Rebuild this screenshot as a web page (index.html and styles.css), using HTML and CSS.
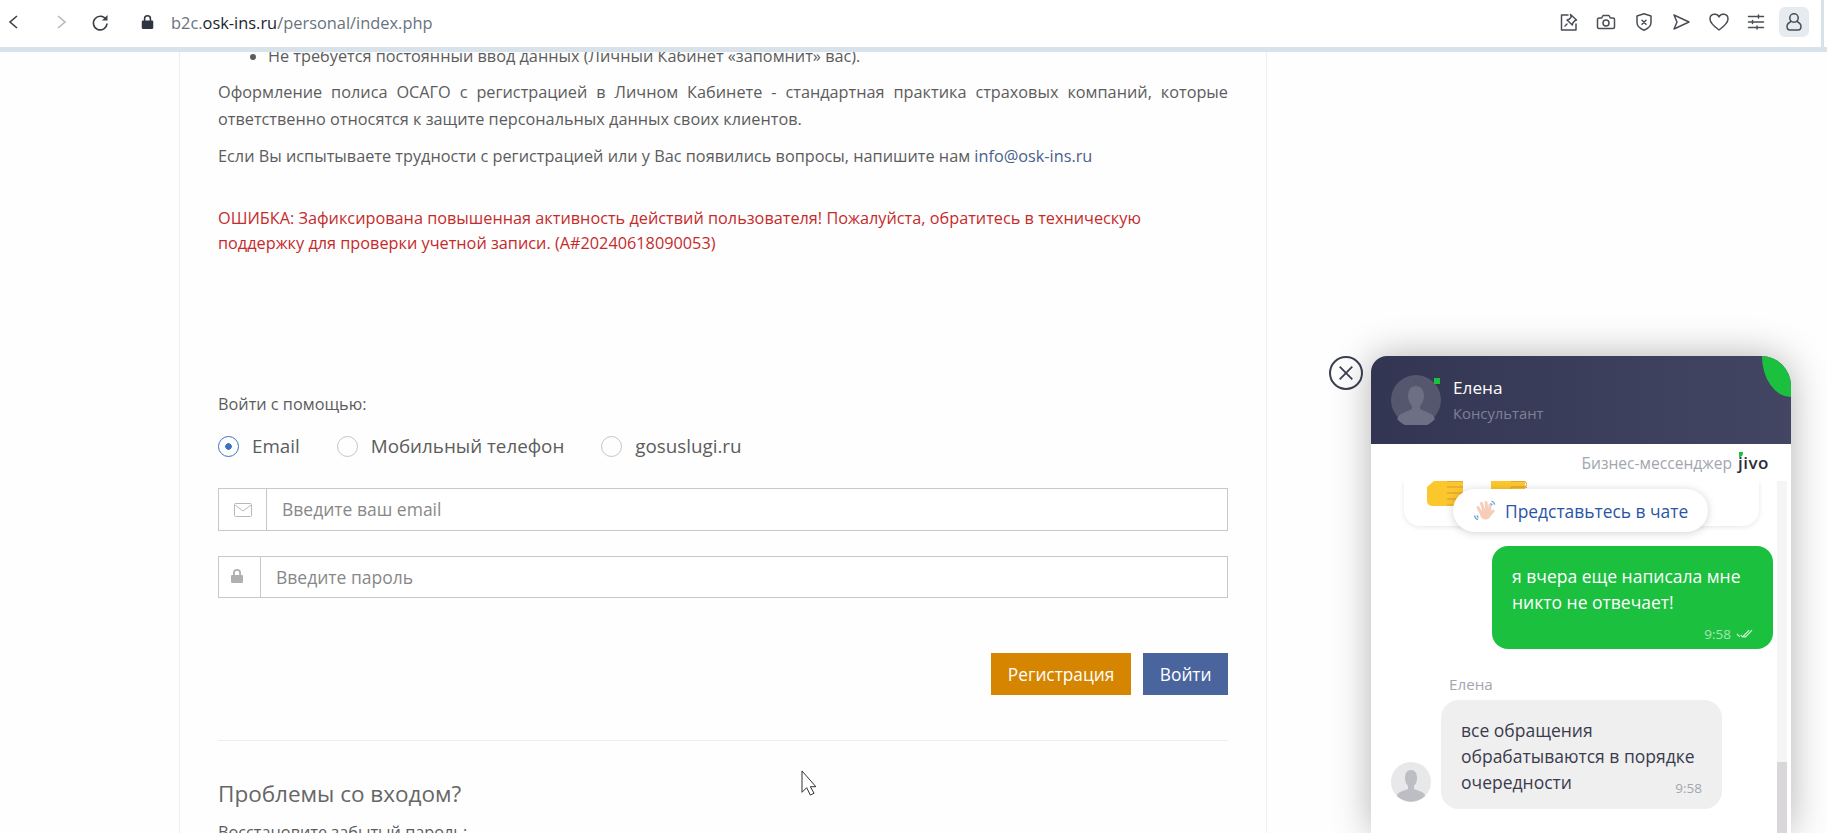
FILE: index.html
```html
<!DOCTYPE html>
<html lang="ru">
<head>
    <meta charset="UTF-8">
    <meta name="viewport" content="width=device-width, initial-scale=1.0">
    <title>Личный кабинет</title>
    <link rel="stylesheet" href="styles.css">
</head>
<body>

<div class="toolbar">
    <svg class="nav-icon back" viewBox="0 0 24 24"><path d="M16 6l-7 6 7 6"/></svg>
    <svg class="nav-icon fwd" viewBox="0 0 24 24"><path d="M8 6l7 6-7 6"/></svg>
    <svg class="nav-icon reload" viewBox="0 0 24 24"><path d="M18 9.500A6.800 6.800 0 1 0 19 13.500"/><path class="solid" d="M19.500 5v5.500H14z"/></svg>
    <svg class="lock" viewBox="0 0 14 16"><path d="M2 6.500h1V4.500a4 4 0 0 1 8 0v2h1a1.200 1.200 0 0 1 1.200 1.200v6.600a1.200 1.200 0 0 1-1.200 1.200H2a1.200 1.200 0 0 1-1.200-1.200V7.700A1.200 1.200 0 0 1 2 6.500zM4.700 6.500h4.600v-2a2.300 2.300 0 0 0-4.600 0z"/></svg>
    <div class="url">b2c.<b>osk-ins.ru</b>/personal/index.php</div>
    <div class="tool-icons">
        <svg class="tool-icon" viewBox="0 0 20 20"><path d="M9 3H2.500v15H17v-6"/><path d="M11.500 2.500l6 5.500-1.700.7-2 2.300-.5 2-5.300-5 2.200-.7 2-2.300z"/><path d="M8 12l-2 2"/></svg>
        <svg class="tool-icon" viewBox="0 0 20 20"><path d="M1.500 7.500A1.500 1.500 0 0 1 3 6h2.700l1.300-2.500h6L14.300 6H17a1.500 1.500 0 0 1 1.500 1.500v7.500a1.500 1.500 0 0 1-1.500 1.500H3A1.500 1.500 0 0 1 1.500 15z"/><circle cx="10" cy="11" r="3"/></svg>
        <svg class="tool-icon" viewBox="0 0 20 20"><path d="M10 1.800l7 2.200v6.500c0 3.700-3.200 6.200-7 7.700-3.800-1.500-7-4-7-7.700V4z"/><path d="M8 8.200l4 4M12 8.200l-4 4"/></svg>
        <svg class="tool-icon" viewBox="0 0 20 20"><path d="M3 3l15 7-15 7 3-7z"/></svg>
        <svg class="tool-icon" viewBox="0 0 20 20"><path d="M10 18C4.500 14 1 11 1 7a4.700 4.700 0 0 1 9-2 4.700 4.700 0 0 1 9 2c0 4-3.500 7-9 11z"/></svg>
        <svg class="tool-icon" viewBox="0 0 20 20"><path d="M2.500 4.500h15M2.500 10h15M2.500 15.500h15M12.500 3v3M6.500 8.500v3M11 14v3"/></svg>
        <div class="profile-btn">
            <svg class="tool-icon" viewBox="0 0 20 20"><circle cx="10" cy="6" r="4.200"/><path d="M7 9.500C4.300 10.800 3 12.500 3 14.500 3 16.500 4.200 18 6 18h8c1.800 0 3-1.500 3-3.500 0-2-1.300-3.700-4-5"/></svg>
        </div>
    </div>
    <div class="window-edge"></div>
</div>

<div class="page">
    <div class="content">
        <ul class="benefits">
            <li>Не требуется постоянный ввод данных (Личный Кабинет «запомнит» вас).</li>
        </ul>
        <p class="justified">Оформление полиса ОСАГО с регистрацией в Личном Кабинете - стандартная практика страховых компаний, которые ответственно относятся к защите персональных данных своих клиентов.</p>
        <p>Если Вы испытываете трудности с регистрацией или у Вас появились вопросы, напишите нам <a href="#">info@osk-ins.ru</a></p>
        <p class="error">ОШИБКА: Зафиксирована повышенная активность действий пользователя! Пожалуйста, обратитесь в техническую поддержку для проверки учетной записи. (A#20240618090053)</p>

        <div class="login-label">Войти с помощью:</div>
        <div class="radios">
            <label class="radio on"><span class="dot"></span>Email</label>
            <label class="radio"><span class="dot"></span>Мобильный телефон</label>
            <label class="radio"><span class="dot"></span>gosuslugi.ru</label>
        </div>

        <div class="field">
            <span class="addon mail">
                <svg viewBox="0 0 18 14"><rect x="0.500" y="0.500" width="17" height="13" rx="1"/><path d="M1 2l8 6 8-6"/></svg>
            </span>
            <span class="placeholder">Введите ваш email</span>
        </div>
        <div class="field second">
            <span class="addon pass">
                <svg viewBox="0 0 12 14"><path class="solid" d="M1 6h1V4a4 4 0 0 1 8 0v2h1a1 1 0 0 1 1 1v6a1 1 0 0 1-1 1H1a1 1 0 0 1-1-1V7a1 1 0 0 1 1-1zM3.800 6h4.400V4a2.200 2.200 0 0 0-4.400 0z"/></svg>
            </span>
            <span class="placeholder">Введите пароль</span>
        </div>

        <div class="buttons">
            <button class="btn orange">Регистрация</button>
            <button class="btn blue">Войти</button>
        </div>

        <hr class="divider">
        <h3>Проблемы со входом?</h3>
        <div class="restore">Восстановите забытый пароль:</div>
    </div>
</div>

<svg class="cursor" viewBox="0 0 16 28"><path d="M1 1v23l5-5 4 8 4-2-4-7h6z"/></svg>

<button class="chat-close">
    <svg viewBox="0 0 20 20"><path d="M3 3l14 14M17 3L3 17"/></svg>
</button>

<div class="chat">
    <div class="chat-head">
        <div class="agent-photo">
            <svg viewBox="0 0 50 50"><path d="M25 11c5 0 8 4 8 10 0 4-2 8-4 10v3l11 5c2 1 3 3 4 5a25 25 0 0 1-38 0c1-2 2-4 4-5l11-5v-3c-2-2-4-6-4-10 0-6 3-10 8-10z"/></svg>
            <span class="online"></span>
        </div>
        <div>
            <div class="agent-name">Елена</div>
            <div class="agent-role">Консультант</div>
        </div>
        <div class="leaf"></div>
    </div>
    <div class="brand-row">
        <span>Бизнес-мессенджер</span>
        <span class="jivo">jivo</span>
    </div>
    <div class="chat-body">
        <div class="msg-list">
            <div class="card-old">
                <svg class="fist" viewBox="0 0 36 25">
                    <path class="palm" d="M7 0h29v21a4 4 0 0 1-4 4H5a5 5 0 0 1-5-5V6z"/>
                    <path class="knuckle" d="M20 .500h14a2 2 0 0 1 0 5.500H20M20 6h15a2.500 2.500 0 0 1 0 6H20M20 12h14a2.500 2.500 0 0 1 0 6H20M20 18h11a2.500 2.500 0 0 1 0 6H20"/>
                </svg>
                <svg class="fist" viewBox="0 0 36 25">
                    <path class="palm" d="M0 0h34v25H0z"/>
                    <path class="knuckle" d="M20 .500h13a2 2 0 0 1 0 5.500H20M20 6h14a2.500 2.500 0 0 1 0 6H20z"/>
                </svg>
            </div>
            <div class="bubble mine">
                я вчера еще написала мне никто не отвечает!
                <div class="stamp">9:58
                    <svg viewBox="0 0 18 10"><path d="M1 5l3 3M5 6l2 2 7-7M8 8l2 0 7-7"/></svg>
                </div>
            </div>
            <div class="sender">Елена</div>
            <div class="agent-row">
                <div class="agent-thumb">
                    <svg viewBox="0 0 40 40"><path d="M20 8c4 0 6 3 6 8 0 3-1 6-3 8v3l8 3c2 1 3 3 3 4a20 20 0 0 1-28 0c0-1 1-3 3-4l8-3v-3c-2-2-3-5-3-8 0-5 2-8 6-8z"/></svg>
                </div>
                <div class="bubble theirs">
                    все обращения обрабатываются в порядке очередности
                    <span class="stamp-in">9:58</span>
                </div>
            </div>
        </div>
        <div class="scrollbar"><div class="thumb"></div></div>
    </div>
    <div class="intro-pill">
        <svg viewBox="0 0 24 24">
            <path class="fingers" d="M8 14L5 8.500M11 12L8.500 4.500M14 12L13 3.500M16.500 13L17 6M16.500 16L20 12"/>
            <ellipse class="palm-hand" cx="12.500" cy="15" rx="5.500" ry="5.500"/>
            <path class="wave" d="M18.500 2c1.500.500 2.800 2 3.200 3.700M17.500 4.500c.800.300 1.400 1 1.700 1.800M1.500 16.500c.300 2 1.800 3.700 3.500 4.200M4 16.500c.200.900.700 1.600 1.500 2"/>
        </svg>
        Представьтесь в чате
    </div>
</div>

</body>
</html>
```

FILE: styles.css
```css
* {
    box-sizing: border-box;
}
html, body {
    height: 100%;
}
body {
    margin: 0;
    overflow: hidden;
    background-color: #fefefe;
    font-family: "Open Sans", Arial, sans-serif;
    color: #5c5c5c;
    position: relative;
}

/* browser toolbar */
.toolbar {
    position: relative;
    display: flex;
    align-items: center;
    height: 52px;
    padding: 0 18px 3px 0;
    background-color: #fff;
    border-bottom: 5px solid #d8e2ea;
}
.nav-icon {
    flex: none;
    width: 24px;
    height: 24px;
    fill: none;
    stroke: #3c4043;
    stroke-width: 1.600;
}
.nav-icon.back {
    margin-left: 1px;
}
.nav-icon.fwd {
    margin-left: 25px;
    stroke: #b4b8bc;
}
.nav-icon.reload {
    margin-left: 14px;
}
.nav-icon .solid {
    fill: #3c4043;
    stroke: none;
}
.lock {
    flex: none;
    width: 13px;
    height: 16px;
    margin-left: 29px;
    fill: #2f3540;
}
.url {
    flex: 1;
    margin-left: 17px;
    font-size: 16.400px;
    color: #68737e;
}
.url b {
    font-weight: 400;
    color: #20242a;
}
.tool-icons {
    display: flex;
    align-items: center;
    gap: 17.500px;
}
.tool-icon {
    width: 20px;
    height: 20px;
    fill: none;
    stroke: #4a4f55;
    stroke-width: 1.500;
    stroke-linejoin: round;
    stroke-linecap: round;
}
.profile-btn {
    display: flex;
    align-items: center;
    justify-content: center;
    width: 30px;
    height: 30px;
    margin-left: -4.500px;
    background-color: #e6ebf0;
    border-radius: 6px;
}
.window-edge {
    position: absolute;
    left: 1821px;
    top: 0;
    width: 3px;
    height: 47px;
    background-color: #d8e2ea;
}

/* page card */
.page {
    width: 1088px;
    margin-left: 179px;
    height: 781px;
    padding: 0 38px;
    border-left: 1px solid #eee;
    border-right: 1px solid #eee;
    overflow: hidden;
}
.content {
    font-size: 16.270px;
    line-height: 27px;
}
.benefits {
    margin: -9px 0 0;
    padding-left: 50px;
}
.content p {
    margin: 10px 0 0;
}
.content .justified {
    margin-top: 9px;
    text-align: justify;
}
.content a {
    color: #4a5f8a;
    text-decoration: none;
}
.content .error {
    margin-top: 36px;
    line-height: 25px;
    color: #c42b2b;
}
.login-label {
    margin-top: 136px;
    line-height: 25px;
}
.radios {
    display: flex;
    gap: 37px;
    margin-top: 15px;
    font-size: 18.800px;
    line-height: 28px;
}
.radio {
    display: flex;
    align-items: center;
    gap: 13px;
}
.dot {
    width: 21px;
    height: 21px;
    border: 1px solid #c4c4c4;
    border-radius: 50%;
}
.radio.on .dot {
    border-color: #3a73c4;
    background: radial-gradient(circle, #3a73c4 0 3px, transparent 3.500px);
}
.field {
    display: flex;
    align-items: center;
    height: 43px;
    margin-top: 28px;
    border: 1px solid #c8c8c8;
    background-color: #fff;
}
.field.second {
    height: 42px;
    margin-top: 25px;
}
.addon {
    display: flex;
    align-items: center;
    justify-content: center;
    height: 100%;
    border-right: 1px solid #c8c8c8;
}
.addon.mail {
    width: 48px;
}
.addon.pass {
    width: 42px;
}
.addon svg {
    fill: none;
    stroke: #b8b8b8;
}
.addon.mail svg {
    width: 18px;
    height: 14px;
}
.addon.pass svg {
    width: 12px;
    height: 14px;
    margin-left: -6px;
    margin-top: -2px;
}
.addon .solid {
    fill: #b0b0b0;
    stroke: none;
}
.placeholder {
    padding-left: 15px;
    font-size: 17.500px;
    color: #888;
}
.buttons {
    display: flex;
    justify-content: flex-end;
    gap: 12px;
    margin-top: 55px;
}
.btn {
    height: 42px;
    padding: 0 17px;
    border: none;
    color: #fff;
    font-family: inherit;
    font-size: 17.300px;
}
.btn.orange {
    background-color: #d58500;
}
.btn.blue {
    padding: 0 16.500px;
    background-color: #4a659e;
}
.divider {
    margin: 45px 0 0;
    border: none;
    border-top: 1px solid #eee;
}
h3 {
    margin: 38px 0 0;
    font-size: 22.500px;
    line-height: 30px;
    font-weight: 400;
    color: #666;
}
.restore {
    margin-top: 11px;
    line-height: 25px;
}
.cursor {
    position: absolute;
    left: 801px;
    top: 770px;
    width: 15px;
    height: 26px;
    fill: #fff;
    stroke: #222;
    stroke-width: 1;
}

/* chat widget */
.chat-close {
    position: absolute;
    left: 1329px;
    top: 356px;
    display: flex;
    align-items: center;
    justify-content: center;
    width: 34px;
    height: 34px;
    padding: 0;
    background-color: #fff;
    border: 2px solid #3c4150;
    border-radius: 50%;
}
.chat-close svg {
    width: 18px;
    height: 18px;
    fill: none;
    stroke: #3c4150;
    stroke-width: 2;
}
.chat {
    position: absolute;
    left: 1371px;
    top: 356px;
    width: 420px;
    height: 477px;
    display: flex;
    flex-direction: column;
    background-color: #fff;
    border-radius: 16px 30px 0 0;
    box-shadow: 0 0 38px rgba(0, 0, 0, 0.3);
}
.chat-head {
    position: relative;
    display: flex;
    align-items: center;
    gap: 12px;
    height: 88px;
    padding-left: 20px;
    overflow: hidden;
    color: #fff;
    background: linear-gradient(90deg, #333652 0%, #424662 100%);
    border-radius: 16px 30px 0 0;
}
.agent-photo {
    position: relative;
    width: 50px;
    height: 50px;
    background-color: #55576f;
    border-radius: 50%;
}
.agent-photo svg {
    display: block;
    fill: #6d6f84;
}
.online {
    position: absolute;
    right: 1px;
    top: 3px;
    width: 6px;
    height: 6px;
    background-color: #1cc03f;
}
.agent-name {
    font-size: 17.200px;
    line-height: 22px;
}
.agent-role {
    margin-top: 4px;
    font-size: 14.800px;
    line-height: 20px;
    color: #7f8196;
}
.leaf {
    position: absolute;
    right: 0;
    top: 0;
    width: 29px;
    height: 41px;
    background-color: #1cc03f;
    border-radius: 0 0 0 100%;
}
.brand-row {
    display: flex;
    align-items: center;
    justify-content: flex-end;
    gap: 6px;
    height: 37px;
    padding-right: 22px;
    font-size: 15.600px;
    color: #a2a6ae;
}
.jivo {
    position: relative;
    font-size: 17px;
    font-weight: 600;
    letter-spacing: 0.500px;
    color: #2c2d3a;
}
.jivo::before {
    content: "";
    position: absolute;
    left: 1px;
    top: 1px;
    width: 4px;
    height: 5px;
    background-color: #1cc03f;
    border-radius: 0 0 4px 0;
}
.chat-body {
    position: relative;
    flex: 1;
    overflow: hidden;
}
.msg-list {
    padding-right: 18px;
}
.card-old {
    display: flex;
    gap: 28px;
    width: 355px;
    height: 45px;
    margin-left: 33px;
    padding-left: 23px;
    background-color: #fff;
    border-radius: 0 0 16px 16px;
    box-shadow: 0 1px 5px rgba(0, 0, 0, 0.1);
}
.fist {
    width: 36px;
    height: 25px;
}
.fist .palm {
    fill: #fcc72c;
}
.fist .knuckle {
    fill: none;
    stroke: #e8a33a;
    stroke-width: 1;
}
.bubble {
    font-size: 17.500px;
    line-height: 26px;
}
.mine {
    width: 281px;
    height: 103px;
    margin: 20px 0 0 121px;
    padding: 17px 20px 0;
    color: #fff;
    background-color: #1cc03f;
    border-radius: 16px;
}
.stamp {
    display: flex;
    align-items: center;
    justify-content: flex-end;
    gap: 5px;
    margin-top: 10px;
    font-size: 13.500px;
    line-height: 18px;
    color: #a5e6b3;
}
.stamp svg {
    width: 17px;
    height: 10px;
    fill: none;
    stroke: #d5f5dc;
    stroke-width: 1.200;
}
.sender {
    margin: 26px 0 0 78px;
    font-size: 15.200px;
    line-height: 18px;
    color: #a2a6ae;
}
.agent-row {
    display: flex;
    align-items: flex-end;
    gap: 10px;
    margin: 7px 0 0 20px;
}
.agent-thumb {
    width: 40px;
    height: 40px;
    margin-bottom: 7px;
    overflow: hidden;
    background-color: #e8e8ea;
    border-radius: 50%;
}
.agent-thumb svg {
    display: block;
    fill: #bdbdc4;
}
.theirs {
    position: relative;
    width: 281px;
    height: 109px;
    padding: 17px 20px 0;
    color: #3a3c4c;
    background-color: #efeff0;
    border-radius: 18px;
}
.stamp-in {
    position: absolute;
    right: 20px;
    bottom: 12px;
    font-size: 13.500px;
    line-height: 18px;
    color: #a5a7ad;
}
.scrollbar {
    position: absolute;
    right: 4px;
    top: 0;
    bottom: 0;
    width: 10px;
    background-color: #f5f5f5;
}
.thumb {
    position: absolute;
    left: 0;
    right: 0;
    bottom: 0;
    height: 71px;
    background-color: #d9d7d9;
}
.intro-pill {
    position: absolute;
    left: 82px;
    top: 133px;
    display: flex;
    align-items: center;
    gap: 8px;
    height: 43px;
    padding: 0 20px;
    font-size: 17.400px;
    color: #2a55a5;
    background-color: #fff;
    border-radius: 22px;
    box-shadow: 0 1px 8px rgba(0, 0, 0, 0.18);
}
.intro-pill svg {
    width: 24px;
    height: 24px;
    fill: none;
}
.intro-pill .fingers {
    stroke: #f5cdb9;
    stroke-width: 3;
    stroke-linecap: round;
}
.intro-pill .palm-hand {
    fill: #f5cdb9;
}
.intro-pill .wave {
    stroke: #5b9bd5;
    stroke-width: 1.200;
}
```
